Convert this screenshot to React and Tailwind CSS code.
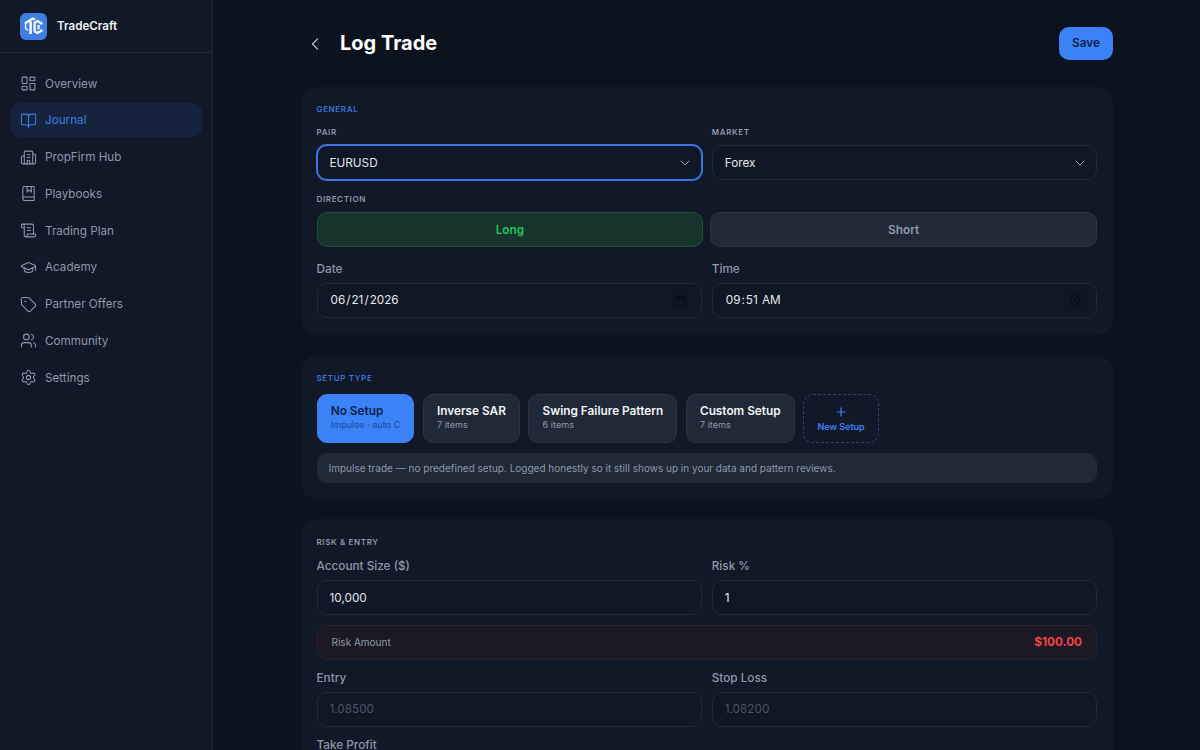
import React from "react";
import { LayoutDashboard, BookOpen, Building2, BookMarked, ScrollText, GraduationCap, Tag, Users, Settings, ChevronLeft, ChevronDown, Plus } from "lucide-react";

const nav = [
  ["Overview", LayoutDashboard],
  ["Journal", BookOpen, true],
  ["PropFirm Hub", Building2],
  ["Playbooks", BookMarked],
  ["Trading Plan", ScrollText],
  ["Academy", GraduationCap],
  ["Partner Offers", Tag],
  ["Community", Users],
  ["Settings", Settings],
];

function Logo() {
  return (
    <svg width="27" height="27" viewBox="0 0 27 27" className="shrink-0">
      <rect width="27" height="27" rx="6" fill="#3f7fe0" />
      <g fill="none" stroke="#f2f6fd" strokeLinejoin="round">
        <path d="M4.8 10.6 13 5.6l2 1.2" strokeWidth="2.4" />
        <path d="M10.6 8.4V21" strokeWidth="2.6" />
        <path d="M22.4 11 17.6 8l-3 1.8v8.4l3 1.9 4.8-3" strokeWidth="2.4" />
        <path d="M5.6 11v4.6l2.6 1.6" strokeWidth="1.4" />
        <path d="M18 12.2l2.2 1.2M18 12.2v3.8l2-1.1" strokeWidth="1.3" />
      </g>
    </svg>
  );
}

function Select({ value, focus }) {
  return (
    <div className="relative">
      <select
        defaultValue={value}
        className={`h-[35px] w-full appearance-none rounded-[10px] border bg-[#0f1726] px-3 pt-[2px] text-[11.75px] text-[#e5e7eb] outline-none ${focus ? "border-[#3b76e0] ring-1 ring-[#3b76e0]" : "border-[#1f2937]"}`}
      >
        <option>{value}</option>
      </select>
      <ChevronDown size={16} strokeWidth={1.5} className="pointer-events-none absolute right-[9px] top-[10px] text-[#9ca3af]" />
    </div>
  );
}

function Small({ children, className = "text-[#8d99ab]" }) {
  return <div className={`text-[8px] leading-[12px] font-semibold uppercase tracking-[0.08em] ${className}`}>{children}</div>;
}

function Field({ label, children }) {
  return (
    <div className="min-w-0 flex-1">
      <div className="mb-[6px] text-[11.75px] leading-[15px] font-medium text-[#8d99ab]">{label}</div>
      {children}
    </div>
  );
}

function Input({ type = "text", value, placeholder }) {
  return (
    <input
      type={type}
      defaultValue={value}
      placeholder={placeholder}
      className="h-[35px] w-full rounded-[10px] border border-[#1f2937] bg-[#0f1726] px-3 text-[11.75px] text-[#e5e7eb] outline-none placeholder:text-[#4b5563] [&::-webkit-calendar-picker-indicator]:opacity-50"
    />
  );
}

function SetupCard({ title, sub, active }) {
  return (
    <div className={`flex h-[49px] flex-col justify-center rounded-[10px] border px-[13.25px] pb-[3px] ${active ? "border-[#3b82f6] bg-[#3b82f6]" : "border-[#2b3543] bg-[#1f2937]"}`}>
      <div className={`text-[11.8px] leading-[16px] font-semibold whitespace-nowrap ${active ? "text-[#0b1f4d]" : "text-[#f3f4f6]"}`}>{title}</div>
      <div className={`text-[9.1px] leading-[12px] whitespace-nowrap ${active ? "text-[#1f4a9c]" : "text-[#8d99ab]"}`}>{sub}</div>
    </div>
  );
}

export default function App() {
  return (
    <div className="flex h-[750px] overflow-hidden bg-[#0c121e] font-['Inter',sans-serif]">
      <aside className="h-full w-[213px] shrink-0 border-r border-[#1f2937] bg-[#111827]">
        <div className="flex h-[53px] items-center gap-[10px] border-b border-[#1f2937] pl-5">
          <Logo />
          <span className="pt-[2px] text-[11.6px] font-semibold text-[#f3f4f6]">TradeCraft</span>
        </div>
        <nav className="flex flex-col gap-[2.75px] px-[10px] pt-[13.5px]">
          {nav.map(([label, Icon, active]) => (
            <div key={label} className={`flex h-[34px] items-center gap-2 rounded-[10px] px-[10px] text-[11.7px] ${active ? "bg-[#15243c] text-[#3b7ce6]" : "text-[#8d99ab]"}`}>
              <Icon size={17} strokeWidth={1.5} />
              <span className="pt-[2px]">{label}</span>
            </div>
          ))}
        </nav>
      </aside>
      <main className="min-w-0 flex-1 pl-[87.5px] pr-[87px]">
        <header className="flex h-[87px] items-start justify-between pt-[27px]">
          <div className="flex h-[33px] items-center">
            <ChevronLeft size={20} strokeWidth={1.7} className="ml-[4.5px] text-[#aeb6c2]" />
            <h1 className="ml-[15px] pb-[2px] text-[20px] font-bold text-white">Log Trade</h1>
          </div>
          <button className="h-[33px] w-[54px] rounded-[10px] bg-[#3b82f6] text-[11.75px] font-semibold text-[#0b1f4d]">Save</button>
        </header>

        <section className="mb-5 rounded-2xl bg-[#111827] px-4 pt-[16px] pb-[17px]">
          <Small className="text-[#3b74d6]">General</Small>
          <div className="mt-[11px] flex gap-[10px]">
            <div className="min-w-0 flex-1">
              <Small>Pair</Small>
              <div className="mt-[7px]"><Select value="EURUSD" focus /></div>
            </div>
            <div className="min-w-0 flex-1">
              <Small>Market</Small>
              <div className="mt-[7px]"><Select value="Forex" /></div>
            </div>
          </div>
          <div className="mt-[13px]"><Small>Direction</Small></div>
          <div className="mt-[7px] flex gap-[7px]">
            <button className="h-[35px] flex-1 rounded-[10px] border border-[#1f5136] bg-[#17342c] pt-[2px] text-[11.75px] font-semibold text-[#22c55e]">Long</button>
            <button className="h-[35px] flex-1 rounded-[10px] border border-[#2b3543] bg-[#1f2937] pt-[2px] text-[11.85px] font-semibold text-[#8d99ab]">Short</button>
          </div>
          <div className="mt-[15px] flex gap-[10px]">
            <Field label="Date"><Input type="date" value="2026-06-21" /></Field>
            <Field label="Time"><Input type="time" value="09:51" /></Field>
          </div>
        </section>

        <section className="mb-5 rounded-2xl bg-[#111827] px-4 pt-[17px] pb-4">
          <Small className="text-[#3b74d6]">Setup Type</Small>
          <div className="mt-[10px] flex gap-[8.25px]">
            <SetupCard title="No Setup" sub="Impulse · auto C" active />
            <SetupCard title="Inverse SAR" sub="7 items" />
            <SetupCard title="Swing Failure Pattern" sub="6 items" />
            <SetupCard title="Custom Setup" sub="7 items" />
            <div className="flex h-[49px] w-[76px] flex-col items-center justify-center rounded-[10px] border border-dashed border-[#27467a] text-[#3b82f6]">
              <Plus size={14} strokeWidth={2} />
              <span className="mt-[2px] text-[9px] leading-[12px] font-semibold">New Setup</span>
            </div>
          </div>
          <div className="mt-[10px] flex h-[30px] items-center rounded-[10px] bg-[#1f2937] px-3 text-[10px] text-[#8d99ab]">
            Impulse trade — no predefined setup. Logged honestly so it still shows up in your data and pattern reviews.
          </div>
        </section>

        <section className="rounded-2xl bg-[#111827] px-4 pt-[17px] pb-4">
          <Small>Risk &amp; Entry</Small>
          <div className="mt-[11px] flex gap-[10px]">
            <Field label="Account Size ($)"><Input value="10,000" /></Field>
            <Field label="Risk %"><Input value="1" /></Field>
          </div>
          <div className="mt-[10px] flex h-[35px] items-center justify-between rounded-[10px] border border-[#2a2030] bg-[#1c1924] px-[14px]">
            <span className="text-[10px] text-[#8d99ab]">Risk Amount</span>
            <span className="text-[11.75px] font-bold text-[#ef4444]">$100.00</span>
          </div>
          <div className="mt-[10.5px] flex gap-[10px]">
            <Field label="Entry"><Input placeholder="1.08500" /></Field>
            <Field label="Stop Loss"><Input placeholder="1.08200" /></Field>
          </div>
          <div className="mt-[11px] flex gap-[10px]">
            <Field label="Take Profit"><Input placeholder="1.09000" /></Field>
            <div className="flex-1" />
          </div>
        </section>
      </main>
    </div>
  );
}
